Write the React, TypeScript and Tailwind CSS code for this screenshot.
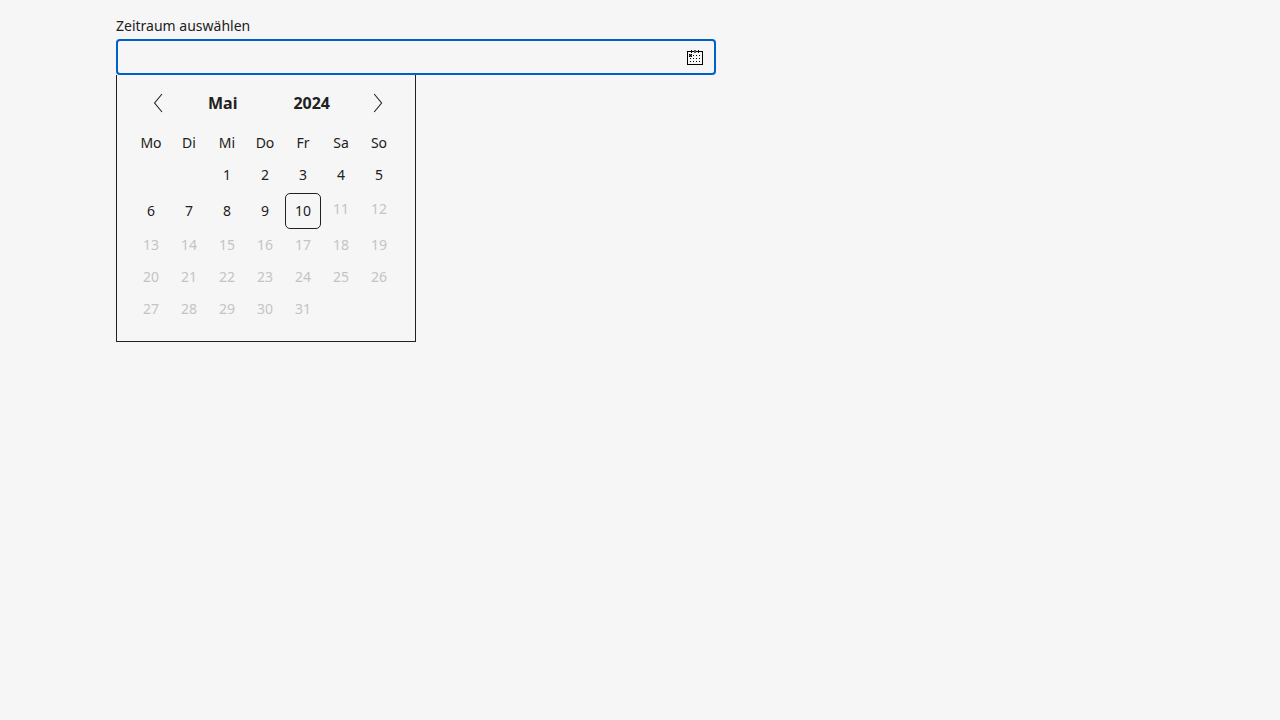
import { useState } from "react";

const weekdays = ["Mo", "Di", "Mi", "Do", "Fr", "Sa", "So"];
const today = 10;

const weeks: (number | null)[][] = [
  [null, null, 1, 2, 3, 4, 5],
  [6, 7, 8, 9, 10, 11, 12],
  [13, 14, 15, 16, 17, 18, 19],
  [20, 21, 22, 23, 24, 25, 26],
  [27, 28, 29, 30, 31, null, null],
];

function CalendarIcon() {
  return (
    <svg width="18" height="16" viewBox="0 0 18 16" shapeRendering="crispEdges" aria-hidden="true">
      <rect x="1.5" y="2.5" width="15" height="13" fill="none" stroke="#000" />
      <g fill="#000">
        <path d="M5 1h1v3H5zM12 1h1v3h-1z" />
        <path d="M8 1h2v3H8z" fill="#555" />
        <path d="M3 5h3v3H3z" fill="#555" />
        <path d="M3 5h1v1H3zM5 5h1v1H5zM4 6h1v1H4zM3 7h1v1H3zM5 7h1v1H5z" />
        <path d="M7 6h1v1H7zM10 6h1v1h-1zM13 6h1v1h-1z" />
        <path d="M4 9h1v1H4zM7 9h1v1H7zM10 9h1v1h-1zM13 9h1v1h-1z" />
        <path d="M4 12h1v1H4zM7 12h1v1H7zM10 12h1v1h-1zM13 12h1v1h-1z" />
      </g>
    </svg>
  );
}

function Day({ day }: { day: number }) {
  const disabled = day > today;
  const look = disabled
    ? "h-8 text-[#c4c4c4]"
    : day === today
      ? "mt-0.5 h-9 rounded-[5px] border border-[#212121] text-[#212121]"
      : day > 5
        ? "mt-0.5 h-9 text-[#212121]"
        : "h-8 text-[#212121]";
  return (
    <button
      type="button"
      disabled={disabled}
      aria-current={day === today ? "date" : undefined}
      className={`mx-auto flex w-9 items-center justify-center ${look}`}
    >
      {day}
    </button>
  );
}

export default function App() {
  const [value, setValue] = useState("");
  return (
    <div className="min-h-screen bg-[#f6f6f6] font-['Noto_Sans',sans-serif] text-sm text-[#212121]">
      <main className="mx-auto max-w-[1048px] pt-4">
        <label htmlFor="range" className="block leading-5">
          Zeitraum auswählen
        </label>
        <div className="mt-[3px] flex h-9 w-full max-w-[600px] items-center rounded border-2 border-[#005fc8] pr-2.5">
          <input
            id="range"
            type="text"
            value={value}
            onChange={(e) => setValue(e.target.value)}
            className="h-full min-w-0 flex-1 bg-transparent px-3 outline-none"
          />
          <button type="button" aria-label="Kalender öffnen">
            <CalendarIcon />
          </button>
        </div>
        <section className="w-[300px] border border-t-0 border-[#212121] pt-3 pr-4 pb-4 pl-[15px]">
          <header className="flex h-8 items-center justify-between pr-[11px] pl-4 text-base font-bold">
            <button type="button" aria-label="Vorheriger Monat" className="flex w-5 justify-center">
              <svg width="10" height="20" viewBox="0 0 10 20" fill="none" stroke="#212121" strokeWidth="1.1" aria-hidden="true">
                <path d="M9 1 1.6 10l7.4 9" />
              </svg>
            </button>
            <div className="flex flex-1 justify-between pr-[38px] pl-10">
              <button type="button">Mai</button>
              <button type="button">2024</button>
            </div>
            <button type="button" aria-label="Nächster Monat" className="flex w-5 justify-center">
              <svg width="10" height="20" viewBox="0 0 10 20" fill="none" stroke="#212121" strokeWidth="1.1" aria-hidden="true">
                <path d="m1.2 1 7.4 9-7.4 9" />
              </svg>
            </button>
          </header>
          <table className="mt-2 w-[266px] table-fixed border-collapse text-center">
            <thead>
              <tr className="h-8">
                {weekdays.map((name) => (
                  <th key={name} scope="col" className="p-0 font-normal">
                    {name}
                  </th>
                ))}
              </tr>
            </thead>
            <tbody>
              {weeks.map((week, row) => (
                <tr key={row}>
                  {week.map((day, column) => (
                    <td key={column} className={row === 1 && day !== null && day > today ? "p-0 pt-0.5 align-top" : "p-0 align-top"}>
                      {day !== null && <Day day={day} />}
                    </td>
                  ))}
                </tr>
              ))}
            </tbody>
          </table>
        </section>
      </main>
    </div>
  );
}
